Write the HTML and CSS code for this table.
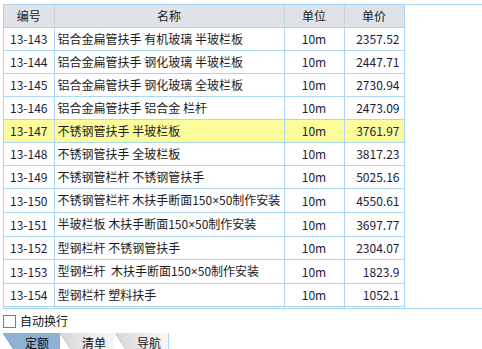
FILE: index.html
```html
<!DOCTYPE html>
<html lang="zh-CN">
<head>
<meta charset="utf-8">
<link rel="stylesheet" href="styles.css">
</head>
<body>
<div class="grid">
  <table class="list">
    <colgroup>
      <col class="c-code"><col class="c-name"><col class="c-unit"><col class="c-price">
    </colgroup>
    <thead>
      <tr><th>编号</th><th>名称</th><th>单位</th><th>单价</th></tr>
    </thead>
    <tbody>
      <tr><td class="code">13-143</td><td class="name">铝合金扁管扶手 有机玻璃 半玻栏板</td><td class="unit">10m</td><td class="price">2357.52</td></tr>
      <tr><td class="code">13-144</td><td class="name">铝合金扁管扶手 钢化玻璃 半玻栏板</td><td class="unit">10m</td><td class="price">2447.71</td></tr>
      <tr><td class="code">13-145</td><td class="name">铝合金扁管扶手 钢化玻璃 全玻栏板</td><td class="unit">10m</td><td class="price">2730.94</td></tr>
      <tr><td class="code">13-146</td><td class="name">铝合金扁管扶手 铝合金 栏杆</td><td class="unit">10m</td><td class="price">2473.09</td></tr>
      <tr class="selected"><td class="code">13-147</td><td class="name">不锈钢管扶手 半玻栏板</td><td class="unit">10m</td><td class="price">3761.97</td></tr>
      <tr><td class="code">13-148</td><td class="name">不锈钢管扶手 全玻栏板</td><td class="unit">10m</td><td class="price">3817.23</td></tr>
      <tr><td class="code">13-149</td><td class="name">不锈钢管栏杆 不锈钢管扶手</td><td class="unit">10m</td><td class="price">5025.16</td></tr>
      <tr><td class="code">13-150</td><td class="name">不锈钢管栏杆 木扶手断面150<span class="times">×</span>50制作安装</td><td class="unit">10m</td><td class="price">4550.61</td></tr>
      <tr><td class="code">13-151</td><td class="name">半玻栏板 木扶手断面150<span class="times">×</span>50制作安装</td><td class="unit">10m</td><td class="price">3697.77</td></tr>
      <tr><td class="code">13-152</td><td class="name">型钢栏杆 不锈钢管扶手</td><td class="unit">10m</td><td class="price">2304.07</td></tr>
      <tr><td class="code">13-153</td><td class="name">型钢栏杆&nbsp; 木扶手断面150<span class="times">×</span>50制作安装</td><td class="unit">10m</td><td class="price">1823.9</td></tr>
      <tr><td class="code">13-154</td><td class="name">型钢栏杆 塑料扶手</td><td class="unit">10m</td><td class="price">1052.1</td></tr>
      <tr><td class="code"></td><td class="name"></td><td class="unit"></td><td class="price"></td></tr>
    </tbody>
  </table>
</div>
<div class="options">
  <span class="checkbox"></span>
  <span class="opt-label">自动换行</span>
</div>
<div class="tabs">
  <div class="tab active">定额</div>
  <div class="tab">清单</div>
  <div class="tab last">导航</div>
</div>
</body>
</html>
```

FILE: styles.css
```css
html, body {
  margin: 0;
  padding: 0;
  background: #ffffff;
}
body {
  font-family: "Noto Sans CJK SC", "Noto Sans", sans-serif;
  font-size: 12px;
  color: #1c1c1c;
  width: 482px;
  height: 349px;
  overflow: hidden;
}
.grid {
  margin: 4px 0 0 3px;
  height: 303px;
  border-top: 1px solid #abd6f3;
  border-bottom: 1px solid #abd6f3;
  border-left: 1px solid #abd6f3;
  overflow: hidden;
}
.list {
  border-collapse: collapse;
  table-layout: fixed;
  width: 400px;
}
.c-code { width: 50px; }
.c-name { width: 230px; }
.c-unit { width: 60px; }
.c-price { width: 60px; }
.list th, .list td {
  height: 22px;
  padding: 0;
  border-right: 1px solid #abd6f3;
  border-bottom: 1px solid #abd6f3;
  white-space: nowrap;
  overflow: hidden;
  line-height: 22px;
}
.list th {
  background: #dfe3e8;
  font-weight: normal;
  color: #222;
  text-align: center;
  border-right-color: #c9d3de;
  border-bottom-color: #abd6f3;
}
.list th:last-child {
  border-right-color: #abd6f3;
}
.code {
  text-align: center;
  color: #1d1a3a;
}
.name {
  text-align: left;
  padding-left: 3px !important;
}
.times {
  font-family: "Noto Sans", "DejaVu Sans", sans-serif;
  font-size: 12px;
  color: #1d1a3a;
}
.unit {
  text-align: center;
  color: #1d1a3a;
}
.price {
  text-align: right;
  padding-right: 4px !important;
  color: #1d1a3a;
}
.selected td {
  background: #fdfc9b;
}
.options {
  display: flex;
  align-items: center;
  height: 24px;
  padding: 0 0 0 3px;
  gap: 4px;
}
.checkbox {
  width: 11px;
  height: 11px;
  border: 1px solid #7b7b7b;
  background: #fff;
}
.opt-label {
  color: #111;
  line-height: 14px;
}
.tabs {
  display: flex;
  margin-left: 3px;
  height: 17px;
}
.tab {
  position: relative;
  height: 17px;
  line-height: 19px;
  padding-left: 22px;
  color: #111;
  background: linear-gradient(to right, #d6d6d6, #f0f0f0 70%, #f7f7f7);
  overflow: hidden;
}
.tab::before {
  content: "";
  position: absolute;
  left: 0;
  top: 0;
  width: 11px;
  height: 17px;
  background: linear-gradient(to bottom left, transparent calc(50% - 0.6px), #9cc6e6 50%, #ffffff calc(50% + 0.6px));
}
.tab.active {
  width: 35px;
  background: #8fb0d2;
}
.tab.active::before {
  background: linear-gradient(to bottom left, transparent calc(50% - 0.6px), #6f93b8 50%, #ffffff calc(50% + 0.6px));
}
.tab:nth-child(2) {
  width: 32px;
  border-right: 1px solid #ffffff;
}
.tab.last {
  width: 31px;
  border-right: 1px solid #abd6f3;
}
```
